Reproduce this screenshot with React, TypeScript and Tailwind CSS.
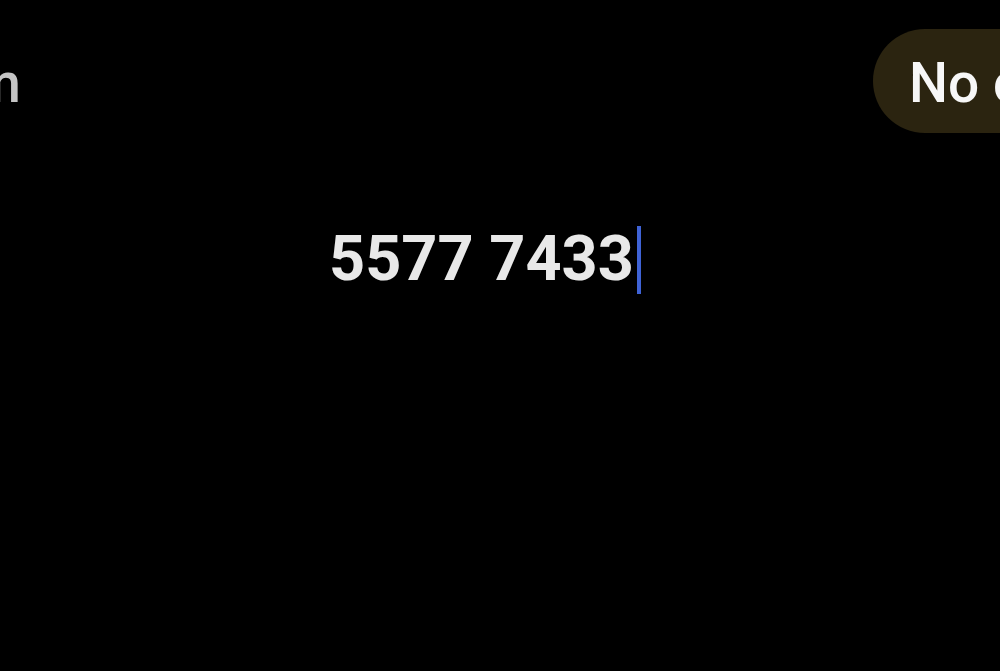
export default function App() {
  return (
    <div className="h-[671px] w-full overflow-hidden bg-black font-['Roboto',sans-serif]">
      {/* top bar: clipped label on the left, status pill running off the right */}
      <div className="flex overflow-hidden pt-[29px]">
        <div className="flex h-[104px] w-[873px] shrink-0 items-center overflow-hidden pt-1">
          <span className="-ml-[27px] text-[55px] font-medium leading-none text-[#c4c4c4]">m</span>
        </div>
        <div className="flex h-[104px] shrink-0 items-center whitespace-nowrap rounded-full bg-[#2b2410] pl-[36px] pr-10 pt-1">
          <span className="text-[55px] font-medium leading-none text-[#f7f7f7]">No caller ID</span>
        </div>
      </div>

      {/* dialled number with caret */}
      <div className="mt-[93px] flex items-start pl-[329px]">
        <span className="mt-[1px] text-[63px] font-bold leading-none text-[#e8e8e8]">5577 7433</span>
        <span className="ml-[3px] h-[68px] w-[4px] bg-[#3f63d6]" />
      </div>
    </div>
  );
}
